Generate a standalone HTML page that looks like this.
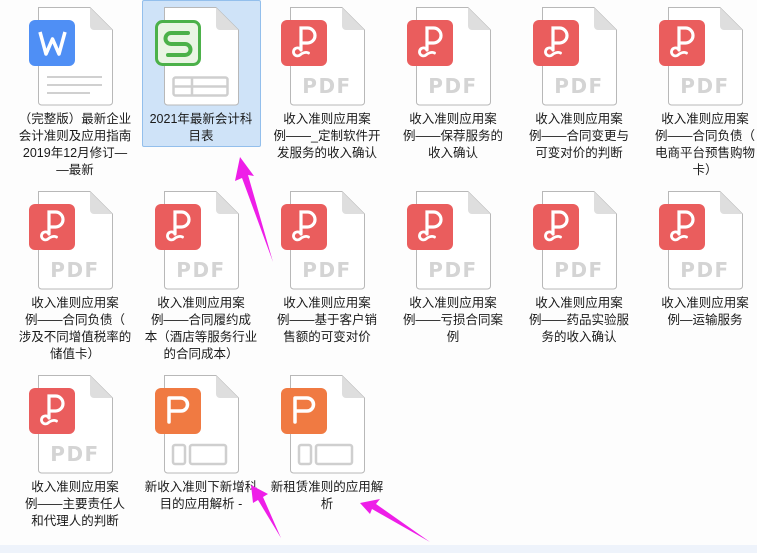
<!DOCTYPE html>
<html><head><meta charset="utf-8"><style>
body{margin:0;width:757px;height:553px;background:#fdfdfd;position:relative;overflow:hidden;font-family:"Liberation Sans","Noto Sans CJK SC",sans-serif;}
.t{position:absolute;width:90px;height:100px}
.l{position:absolute;width:130px;text-align:center;font-size:12.5px;line-height:17px;color:#1a1a1a;white-space:nowrap}
.sel{position:absolute;left:142px;top:0;width:117px;height:145px;background:#cfe3f8;border:1px solid #93bfec;border-radius:2px}
.strip{position:absolute;left:0;top:545px;width:757px;height:8px;background:#eef3fb}
</style></head><body>
<div class="sel"></div>
<div class="strip"></div>
<svg width="0" height="0" style="position:absolute"><defs>
<g id="doc"><path d="M10.5 0.5H62L84.5 23V95a3 3 0 0 1-3 3H13.5a3 3 0 0 1-3-3Z" fill="#fff" stroke="#b8b8b8"/><path d="M62 0.5V19a4 4 0 0 0 4 4H84.5Z" fill="#dedede"/></g>
<g id="pdf"><use href="#doc"/><rect x="1" y="13" width="46" height="46" rx="6" fill="#ea5d5d"/>
<path d="M21 43V21H27.5a7.5 7.5 0 0 1 0 15H22" fill="none" stroke="#fff" stroke-width="3.2" stroke-linecap="round"/>
<path d="M21 43a4 4 0 1 0-1 5C22 46 26 44.5 28.5 46" fill="none" stroke="#fff" stroke-width="2.8" stroke-linecap="round"/>
<text x="47" y="86" text-anchor="middle" font-family="DejaVu Sans" font-size="20" font-weight="bold" letter-spacing="1.5" fill="#d4d4d4">PDF</text></g>
<g id="ppt"><use href="#doc"/><rect x="1" y="13" width="46" height="46" rx="6" fill="#f07a42"/>
<path d="M15 47V23H27a6.5 6.5 0 0 1 0 13H15" fill="none" stroke="#fff" stroke-width="3.5" stroke-linecap="round" stroke-linejoin="round"/>
<rect x="19" y="70" width="12" height="19" rx="2" fill="none" stroke="#cfcfcf" stroke-width="2.5"/>
<rect x="36" y="70" width="36" height="19" rx="2" fill="none" stroke="#cfcfcf" stroke-width="2.5"/></g>
</defs></svg>

<svg class="t" style="left:28px;top:7px" viewBox="0 0 90 100"><use href="#doc"/><rect x="1" y="13" width="46" height="46" rx="6" fill="#4f8ff5"/><path d="M12 25L18 47 24.5 32 31 47 37 25" fill="none" stroke="#fff" stroke-width="3.5" stroke-linejoin="round"/><path d="M19 70H74M19 78H74M19 86H62" stroke="#d0d0d0" stroke-width="2"/></svg>
<svg class="t" style="left:154px;top:7px" viewBox="0 0 90 100"><use href="#doc"/><rect x="2.5" y="14.5" width="43" height="43" rx="6" fill="#eaf5e4" stroke="#4cb14a" stroke-width="3"/><path d="M34 26H17a5.5 5.5 0 0 0 0 11H31a5.5 5.5 0 0 1 0 11H14" fill="none" stroke="#4cb14a" stroke-width="4" stroke-linecap="round"/><rect x="19.5" y="70.5" width="54" height="18" rx="2" fill="none" stroke="#cfcfcf" stroke-width="2.5"/><path d="M19.5 79.5H73.5M38 70.5V88.5" stroke="#cfcfcf" stroke-width="2.5"/></svg>
<svg class="t" style="left:280px;top:7px" viewBox="0 0 90 100"><use href="#pdf"/></svg>
<svg class="t" style="left:406px;top:7px" viewBox="0 0 90 100"><use href="#pdf"/></svg>
<svg class="t" style="left:532px;top:7px" viewBox="0 0 90 100"><use href="#pdf"/></svg>
<svg class="t" style="left:658px;top:7px" viewBox="0 0 90 100"><use href="#pdf"/></svg>
<svg class="t" style="left:28px;top:191px" viewBox="0 0 90 100"><use href="#pdf"/></svg>
<svg class="t" style="left:154px;top:191px" viewBox="0 0 90 100"><use href="#pdf"/></svg>
<svg class="t" style="left:280px;top:191px" viewBox="0 0 90 100"><use href="#pdf"/></svg>
<svg class="t" style="left:406px;top:191px" viewBox="0 0 90 100"><use href="#pdf"/></svg>
<svg class="t" style="left:532px;top:191px" viewBox="0 0 90 100"><use href="#pdf"/></svg>
<svg class="t" style="left:658px;top:191px" viewBox="0 0 90 100"><use href="#pdf"/></svg>
<svg class="t" style="left:28px;top:375px" viewBox="0 0 90 100"><use href="#pdf"/></svg>
<svg class="t" style="left:154px;top:375px" viewBox="0 0 90 100"><use href="#ppt"/></svg>
<svg class="t" style="left:280px;top:375px" viewBox="0 0 90 100"><use href="#ppt"/></svg>

<div class="l" style="left:10px;top:111px">（完整版）最新企业<br>会计准则及应用指南<br>2019年12月修订—<br>—最新</div>
<div class="l" style="left:136px;top:111px">2021年最新会计科<br>目表</div>
<div class="l" style="left:262px;top:111px">收入准则应用案<br>例——_定制软件开<br>发服务的收入确认</div>
<div class="l" style="left:388px;top:111px">收入准则应用案<br>例——保荐服务的<br>收入确认</div>
<div class="l" style="left:514px;top:111px">收入准则应用案<br>例——合同变更与<br>可变对价的判断</div>
<div class="l" style="left:640px;top:111px">收入准则应用案<br>例——合同负债（<br>电商平台预售购物<br>卡）</div>

<div class="l" style="left:10px;top:295px">收入准则应用案<br>例——合同负债（<br>涉及不同增值税率的<br>储值卡）</div>
<div class="l" style="left:136px;top:295px">收入准则应用案<br>例——合同履约成<br>本（酒店等服务行业<br>的合同成本）</div>
<div class="l" style="left:262px;top:295px">收入准则应用案<br>例——基于客户销<br>售额的可变对价</div>
<div class="l" style="left:388px;top:295px">收入准则应用案<br>例——亏损合同案<br>例</div>
<div class="l" style="left:514px;top:295px">收入准则应用案<br>例——药品实验服<br>务的收入确认</div>
<div class="l" style="left:640px;top:295px">收入准则应用案<br>例—运输服务</div>

<div class="l" style="left:10px;top:479px">收入准则应用案<br>例——主要责任人<br>和代理人的判断</div>
<div class="l" style="left:136px;top:479px">新收入准则下新增科<br>目的应用解析 -</div>
<div class="l" style="left:262px;top:479px">新租赁准则的应用解<br>析</div>

<svg style="position:absolute;left:0;top:0" width="757" height="553">
<g fill="#ee1ee8">
<polygon points="240,157 254,176 248,175 273,262 242,178 235,181"/>
<polygon points="251,485 268,494 263,497 281,538 258,500 253,503"/>
<polygon points="360,503 380,499 376,504 430,542 372,509 370,514"/>
</g></svg>
</body></html>
